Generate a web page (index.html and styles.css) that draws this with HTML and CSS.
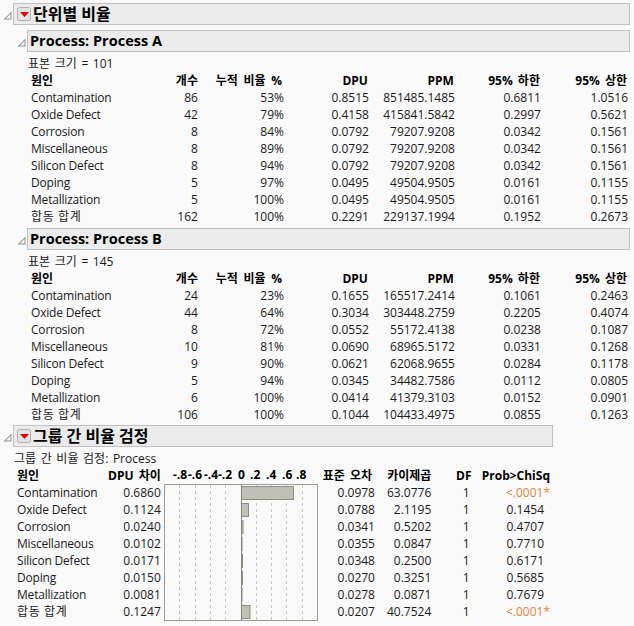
FILE: index.html
```html
<!DOCTYPE html>
<html lang="ko">
<head>
<meta charset="utf-8">
<title>단위별 비율</title>
<link rel="stylesheet" href="styles.css">
</head>
<body>
<main class="report">
  <section class="node node-top">
    <header class="head">
      <svg class="tri" viewBox="0 0 9 9"><path d="M8.500 .5V8.500H.5Z M7.500 2.800V7.500H2.800Z" fill="#8f8f8f" fill-rule="evenodd"/></svg>
      <div class="bar bar-title">
        <span class="menu"><svg viewBox="0 0 9 5"><path d="M0 0H9L4.500 5Z" fill="#e00000"/></svg></span>
        <h1>단위별 비율</h1>
      </div>
    </header>
    <section class="node node-sub">
      <header class="head">
        <svg class="tri" viewBox="0 0 9 9"><path d="M8.500 .5V8.500H.5Z M7.500 2.800V7.500H2.800Z" fill="#8f8f8f" fill-rule="evenodd"/></svg>
        <div class="bar"><h2>Process: Process A</h2></div>
      </header>
      <p class="note">표본 크기 = 101</p>
      <table class="data">
        <thead><tr><th>원인</th><th>개수</th><th>누적 비율 %</th><th>DPU</th><th>PPM</th><th>95% 하한</th><th>95% 상한</th></tr></thead>
        <tbody>
          <tr><td>Contamination</td><td>86</td><td>53%</td><td>0.8515</td><td>851485.1485</td><td>0.6811</td><td>1.0516</td></tr>
          <tr><td>Oxide Defect</td><td>42</td><td>79%</td><td>0.4158</td><td>415841.5842</td><td>0.2997</td><td>0.5621</td></tr>
          <tr><td>Corrosion</td><td>8</td><td>84%</td><td>0.0792</td><td>79207.9208</td><td>0.0342</td><td>0.1561</td></tr>
          <tr><td>Miscellaneous</td><td>8</td><td>89%</td><td>0.0792</td><td>79207.9208</td><td>0.0342</td><td>0.1561</td></tr>
          <tr><td>Silicon Defect</td><td>8</td><td>94%</td><td>0.0792</td><td>79207.9208</td><td>0.0342</td><td>0.1561</td></tr>
          <tr><td>Doping</td><td>5</td><td>97%</td><td>0.0495</td><td>49504.9505</td><td>0.0161</td><td>0.1155</td></tr>
          <tr><td>Metallization</td><td>5</td><td>100%</td><td>0.0495</td><td>49504.9505</td><td>0.0161</td><td>0.1155</td></tr>
          <tr><td>합동 합계</td><td>162</td><td>100%</td><td>0.2291</td><td>229137.1994</td><td>0.1952</td><td>0.2673</td></tr>
        </tbody>
      </table>
    </section>
    <section class="node node-sub">
      <header class="head">
        <svg class="tri" viewBox="0 0 9 9"><path d="M8.500 .5V8.500H.5Z M7.500 2.800V7.500H2.800Z" fill="#8f8f8f" fill-rule="evenodd"/></svg>
        <div class="bar"><h2>Process: Process B</h2></div>
      </header>
      <p class="note">표본 크기 = 145</p>
      <table class="data">
        <thead><tr><th>원인</th><th>개수</th><th>누적 비율 %</th><th>DPU</th><th>PPM</th><th>95% 하한</th><th>95% 상한</th></tr></thead>
        <tbody>
          <tr><td>Contamination</td><td>24</td><td>23%</td><td>0.1655</td><td>165517.2414</td><td>0.1061</td><td>0.2463</td></tr>
          <tr><td>Oxide Defect</td><td>44</td><td>64%</td><td>0.3034</td><td>303448.2759</td><td>0.2205</td><td>0.4074</td></tr>
          <tr><td>Corrosion</td><td>8</td><td>72%</td><td>0.0552</td><td>55172.4138</td><td>0.0238</td><td>0.1087</td></tr>
          <tr><td>Miscellaneous</td><td>10</td><td>81%</td><td>0.0690</td><td>68965.5172</td><td>0.0331</td><td>0.1268</td></tr>
          <tr><td>Silicon Defect</td><td>9</td><td>90%</td><td>0.0621</td><td>62068.9655</td><td>0.0284</td><td>0.1178</td></tr>
          <tr><td>Doping</td><td>5</td><td>94%</td><td>0.0345</td><td>34482.7586</td><td>0.0112</td><td>0.0805</td></tr>
          <tr><td>Metallization</td><td>6</td><td>100%</td><td>0.0414</td><td>41379.3103</td><td>0.0152</td><td>0.0901</td></tr>
          <tr><td>합동 합계</td><td>106</td><td>100%</td><td>0.1044</td><td>104433.4975</td><td>0.0855</td><td>0.1263</td></tr>
        </tbody>
      </table>
    </section>
  </section>
  <section class="node node-test">
    <header class="head">
      <svg class="tri" viewBox="0 0 9 9"><path d="M8.500 .5V8.500H.5Z M7.500 2.800V7.500H2.800Z" fill="#8f8f8f" fill-rule="evenodd"/></svg>
      <div class="bar bar-title">
        <span class="menu"><svg viewBox="0 0 9 5"><path d="M0 0H9L4.500 5Z" fill="#e00000"/></svg></span>
        <h1>그룹 간 비율 검정</h1>
      </div>
    </header>
    <p class="note note-test">그룹 간 비율 검정: Process</p>
    <table class="test">
      <thead>
        <tr>
          <th>원인</th><th>DPU 차이</th>
          <th class="axis-cell">
            <svg class="axis" viewBox="0 0 160 17">
              <text x="12" y="12">-.8</text><text x="27" y="12">-.6</text><text x="43" y="12">-.4</text><text x="57" y="12">-.2</text><text x="77" y="12">0</text><text x="89" y="12">.2</text><text x="105" y="12">.4</text><text x="121" y="12">.6</text><text x="135" y="12">.8</text>
            </svg>
          </th>
          <th>표준 오차</th><th>카이제곱</th><th>DF</th><th>Prob&gt;ChiSq</th>
        </tr>
      </thead>
      <tbody>
        <tr><td>Contamination</td><td>0.6860</td>
          <td class="chart-cell" rowspan="8">
            <svg class="chart" viewBox="0 0 154 137">
              <rect x=".5" y=".5" width="153" height="136" fill="none" stroke="#9c9c8e"/>
              <path class="grid" d="M15.500 1V136M31.500 1V136M46.500 1V136M61.500 1V136M92.500 1V136M107.500 1V136M122.500 1V136M138.500 1V136"/>
              <g class="bars">
                <rect x="77.500" y="2.500" width="52" height="13"/>
                <rect x="77.500" y="19.500" width="7" height="13"/>
                <rect x="77.500" y="36.500" width="1.500" height="13"/>
                <rect x="77.500" y="53.500" width=".5" height="13"/>
                <rect x="77.500" y="70.500" width="1" height="13"/>
                <rect x="77.500" y="87.500" width="1" height="13"/>
                <rect x="77.500" y="104.500" width=".5" height="13"/>
                <rect x="77.500" y="121.500" width="8.500" height="13"/>
              </g>
              <path d="M77.500 1V136" stroke="#85857a" fill="none"/>
            </svg>
          </td>
          <td>0.0978</td><td>63.0776</td><td>1</td><td class="sig">&lt;.0001*</td></tr>
        <tr><td>Oxide Defect</td><td>0.1124</td><td>0.0788</td><td>2.1195</td><td>1</td><td class="pv">0.1454</td></tr>
        <tr><td>Corrosion</td><td>0.0240</td><td>0.0341</td><td>0.5202</td><td>1</td><td class="pv">0.4707</td></tr>
        <tr><td>Miscellaneous</td><td>0.0102</td><td>0.0355</td><td>0.0847</td><td>1</td><td class="pv">0.7710</td></tr>
        <tr><td>Silicon Defect</td><td>0.0171</td><td>0.0348</td><td>0.2500</td><td>1</td><td class="pv">0.6171</td></tr>
        <tr><td>Doping</td><td>0.0150</td><td>0.0270</td><td>0.3251</td><td>1</td><td class="pv">0.5685</td></tr>
        <tr><td>Metallization</td><td>0.0081</td><td>0.0278</td><td>0.0871</td><td>1</td><td class="pv">0.7679</td></tr>
        <tr><td>합동 합계</td><td>0.1247</td><td>0.0207</td><td>40.7524</td><td>1</td><td class="sig">&lt;.0001*</td></tr>
      </tbody>
    </table>
  </section>
</main>
</body>
</html>
```

FILE: styles.css
```css
* { box-sizing: border-box; }
html, body { margin: 0; padding: 0; }
body {
  width: 634px;
  height: 626px;
  overflow: hidden;
  background: #f9f9f9;
  color: #1a1a1a;
  font: 12px/17px "Open Sans", "Noto Sans CJK KR", sans-serif;
}
.report { padding-top: 3px; }
.node-top { padding-left: 3px; }
.node-sub { margin-top: 5px; padding-left: 14px; }
.node-sub + .node-sub { margin-top: 3px; }
.node-test { margin-top: 2px; padding-left: 3px; }
.head { display: flex; align-items: center; gap: 1px; }
.tri { width: 9px; height: 9px; flex: none; margin-top: 2px; }
.bar {
  display: flex;
  align-items: center;
  flex: none;
  width: 603px;
  height: 22px;
  padding-left: 2px;
  background: #ebebeb;
  border: 1px solid #c0c0c0;
}
.bar-title { width: 617px; padding-left: 3px; gap: 2px; }
.node-test .bar-title { width: 540px; }
.menu {
  display: flex;
  align-items: center;
  justify-content: center;
  flex: none;
  width: 14px;
  height: 14px;
  background: #e4e4e4;
  border: 1px solid #b4b4b4;
  border-radius: 2px;
}
.menu svg { width: 9px; height: 5px; display: block; }
h1, h2 { margin: 0; font-weight: 700; color: #000; }
h1 { font-size: 16px; line-height: 20px; }
h2 { font-size: 14.500px; line-height: 20px; }
.note { margin: 3px 0 0; height: 17px; padding-left: 11px; word-spacing: 1.500px; }
table { border-collapse: collapse; table-layout: fixed; }
th, td { padding: 0; height: 17px; text-align: right; white-space: nowrap; font-weight: 400; }
th { font-weight: 700; color: #000; word-spacing: 2px; }
th:first-child, td:first-child { text-align: left; }
td:first-child { letter-spacing: -.2px; }
tbody tr:last-child td:first-child { letter-spacing: .6px; }
.data { width: 598px; margin-left: 13px; }
.data th:nth-child(1) { width: 109px; padding-left: 1px; }
.data th:nth-child(2) { width: 57px; }
.data th:nth-child(3) { width: 85px; padding-right: 2px; word-spacing: 2.500px; }
.data th:nth-child(4) { width: 84px; padding-right: 1px; }
.data th:nth-child(5) { width: 85px; padding-right: 1px; }
.data th:nth-child(6) { width: 85px; padding-right: 1px; }
.data th:nth-child(7) { width: 86px; padding-right: 1px; }
.data td:first-child { padding-left: 1px; }
.test { width: 533px; margin-left: 14px; }
.test th:nth-child(1) { width: 83px; }
.test th:nth-child(2) { width: 60px; }
.test th:nth-child(3) { width: 158px; }
.test th:nth-child(4) { width: 55px; padding-right: 3px; }
.test th:nth-child(5) { width: 56px; }
.test th:nth-child(6) { width: 40px; }
.test th:nth-child(7) { width: 78px; }
.test td:nth-last-child(2) { padding-right: 2px; }
.axis-cell { padding: 0; }
.axis { display: block; width: 160px; height: 17px; overflow: visible; }
.axis text { font: 700 12px "Open Sans", sans-serif; fill: #000; }
.chart-cell { padding: 0 0 0 3px; vertical-align: top; }
.chart { display: block; width: 154px; height: 137px; margin-bottom: -1px; }
.grid { stroke: #c8c8c8; stroke-dasharray: 3 3; fill: none; }
.bars rect { fill: #c0c0b6; stroke: #8c8c80; }
.pv { padding-right: 6px; }
.sig { color: #e8833a; }
```
